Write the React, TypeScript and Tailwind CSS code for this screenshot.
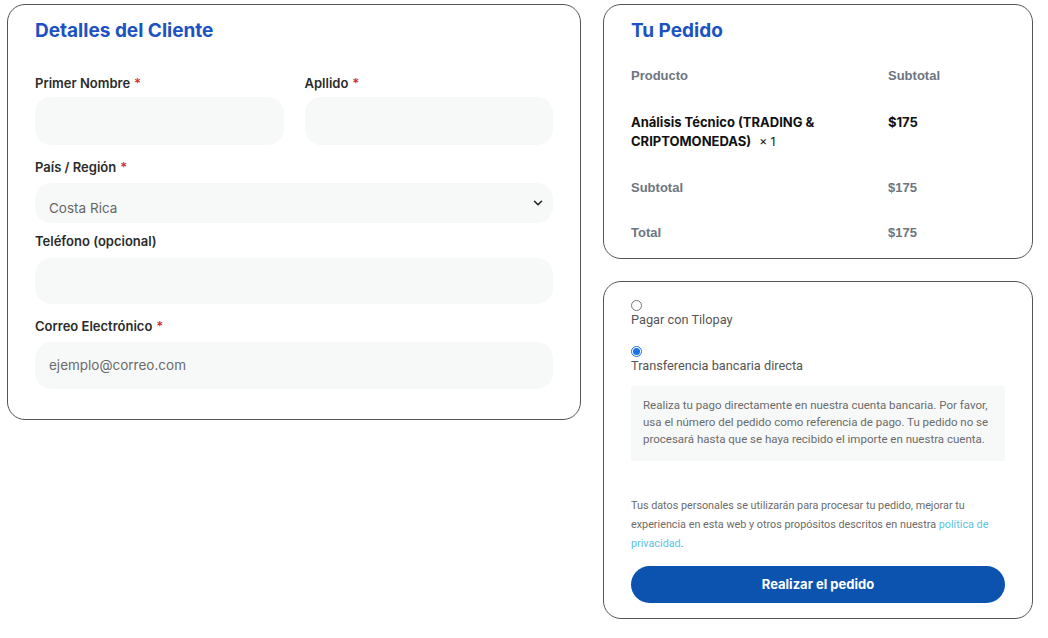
import { ChevronDown } from "lucide-react"

const head = "font-['Inter',sans-serif]"
const arial = "font-['Liberation_Sans',Arial,sans-serif]"
const roboto = "font-['Roboto',Arial,sans-serif]"

function Label({ text, required, className }: { text: string; required?: boolean; className?: string }) {
  return (
    <div className={`${head} text-[13px] leading-[20px] font-semibold text-[#2b2b2b] ${className ?? ""}`}>
      {text}
      {required && <span className="ml-1 text-[#d0312d]">*</span>}
    </div>
  )
}

function Field({ className, placeholder }: { className?: string; placeholder?: string }) {
  return (
    <div className={`flex items-center rounded-2xl bg-[#f7f9f9] px-[14px] ${className ?? ""}`}>
      {placeholder && (
        <span className={`${head} text-[13.5px] text-[#6b6b6b]`}>{placeholder}</span>
      )}
    </div>
  )
}

function CustomerDetails() {
  return (
    <section className="w-[574px] h-[416px] rounded-[18px] border border-[#555] bg-white px-[27px] pt-[13px]">
      <h2 className={`${head} text-[19px] leading-[26px] font-bold text-[#1c52c2]`}>Detalles del Cliente</h2>
      <div className="mt-[29px] grid grid-cols-2 gap-x-[21px]">
        <div>
          <Label text="Primer Nombre" required />
          <Field className="mt-[4px] h-[48px]" />
        </div>
        <div>
          <Label text="Apllido" required />
          <Field className="mt-[4px] h-[48px]" />
        </div>
      </div>
      <Label text="País / Región" required className="mt-[12px]" />
      <div className="mt-[6px] flex h-[40px] items-center justify-between rounded-2xl bg-[#f7f9f9] pl-[14px] pr-[8px]">
        <span className={`${head} pt-[10px] text-[13.5px] text-[#666]`}>Costa Rica</span>
        <ChevronDown size={14} strokeWidth={2.6} className="text-[#222]" />
      </div>
      <Label text="Teléfono (opcional)" className="mt-[8px]" />
      <Field className="mt-[7px] h-[46px]" />
      <Label text="Correo Electrónico" required className="mt-[12px]" />
      <Field className="mt-[6px] h-[47px]" placeholder="ejemplo@correo.com" />
    </section>
  )
}

function OrderSummary() {
  return (
    <section className="h-[255px] rounded-[18px] border border-[#555] bg-white px-[27px] pt-[13px]">
      <h2 className={`${head} text-[19px] leading-[26px] font-bold text-[#1c52c2]`}>Tu Pedido</h2>
      <div className={`${arial} mt-[9px] flex h-[46px] items-center text-[13px] font-bold text-[#6e7580]`}>
        <div className="w-[257px]">Producto</div>
        <div>Subtotal</div>
      </div>
      <div className={`${head} flex h-[66px] pt-[14px] text-[13px] leading-[19px] font-bold text-[#111]`}>
        <div className="w-[257px]">
          Análisis Técnico (TRADING &amp;
          <br />
          CRIPTOMONEDAS)<span className="ml-2 font-normal text-[12px]">× 1</span>
        </div>
        <div>$175</div>
      </div>
      <div className={`${arial} flex h-[45px] items-center text-[13px] font-bold text-[#6e7580]`}>
        <div className="w-[257px]">Subtotal</div>
        <div>$175</div>
      </div>
      <div className={`${arial} flex h-[45px] items-center text-[13px] font-bold text-[#6e7580]`}>
        <div className="w-[257px]">Total</div>
        <div>$175</div>
      </div>
    </section>
  )
}

function Radio({ checked }: { checked?: boolean }) {
  return (
    <span
      className={`flex h-[11px] w-[11px] items-center justify-center rounded-full border ${
        checked ? "border-[#1a73e8]" : "border-[#767676]"
      }`}
    >
      {checked && <span className="h-[7px] w-[7px] rounded-full bg-[#1a73e8]" />}
    </span>
  )
}

function Payment() {
  return (
    <section className="h-[338px] rounded-[18px] border border-[#555] bg-white px-[27px] pt-[18px]">
      <Radio />
      <div className={`${roboto} -mt-[1px] text-[12.75px] leading-[20px] text-[#555]`}>Pagar con Tilopay</div>
      <div className="mt-[16px]">
        <Radio checked />
      </div>
      <div className={`${roboto} -mt-[1px] text-[12.75px] leading-[20px] text-[#555]`}>
        Transferencia bancaria directa
      </div>
      <div className={`${roboto} mt-[10px] h-[75px] bg-[#f7f9f9] px-[12px] pt-[11px] text-[11.5px] leading-[17px] text-[#6b6b6b]`}>
        Realiza tu pago directamente en nuestra cuenta bancaria. Por favor, usa el número del pedido como referencia de
        pago. Tu pedido no se procesará hasta que se haya recibido el importe en nuestra cuenta.
      </div>
      <p className={`${roboto} mt-[35px] text-[10.8px] leading-[19px] text-[#6b6b6b]`}>
        Tus datos personales se utilizarán para procesar tu pedido, mejorar tu experiencia en esta web y otros propósitos
        descritos en nuestra <span className="text-[#5bc3e3]">política de privacidad</span>.
      </p>
      <button
        className={`${head} mt-[13px] h-[37px] w-full rounded-full bg-[#0c53b0] text-[13px] font-bold text-white`}
      >
        Realizar el pedido
      </button>
    </section>
  )
}

export default function App() {
  return (
    <div className="flex h-[638px] w-[1048px] gap-[22px] bg-white pl-[7px] pt-[4px]">
      <CustomerDetails />
      <div className="flex w-[430px] flex-col gap-[22px]">
        <OrderSummary />
        <Payment />
      </div>
    </div>
  )
}
